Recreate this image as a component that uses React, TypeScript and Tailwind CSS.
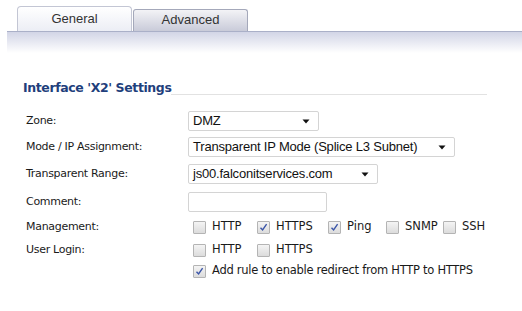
import React from "react";

const labelFont = { fontFamily: "'DejaVu Sans', Verdana, sans-serif" };

function Arrow() {
  return (
    <svg width="8" height="5" viewBox="0 0 8 5" className="shrink-0">
      <path d="M0.5 0.5 L7.5 0.5 L4 4.5 Z" fill="#111" />
    </svg>
  );
}

function Select({ value, width }: { value: string; width: string }) {
  return (
    <div
      className={`h-[20px] ${width} border border-[#d4d4d4] rounded-[2px] bg-white flex items-center justify-between pl-[4px] pr-[8px] text-[13px] text-[#111] font-['Liberation_Sans',Arial,sans-serif] tracking-[-0.2px]`}
    >
      <span>{value}</span>
      <Arrow />
    </div>
  );
}

function Check({ checked = false }: { checked?: boolean }) {
  return (
    <span className="w-[13px] h-[13px] shrink-0 border border-[#b4b4b4] rounded-[1px] bg-gradient-to-b from-[#f4f4f4] to-[#dcdcdc] flex items-center justify-center">
      {checked && (
        <svg width="9" height="9" viewBox="0 0 9 9">
          <path d="M1.5 4.8 L3.6 7 L7.6 1.2" stroke="#3b55a8" strokeWidth="1.4" fill="none" />
        </svg>
      )}
    </span>
  );
}

function Opt({ label, checked, gap }: { label: string; checked?: boolean; gap: string }) {
  return (
    <span className={`flex items-center gap-[6px] ${gap}`}>
      <Check checked={checked} />
      <span>{label}</span>
    </span>
  );
}

export default function App() {
  return (
    <div className="w-[522px] h-[311px] bg-white overflow-hidden text-[#1a1a1a]" style={labelFont}>
      {/* tabs */}
      <div className="flex items-end h-[31px] pl-[17px] gap-[1px] font-['Liberation_Sans',Arial,sans-serif] text-[13px]">
        <div className="w-[115px] h-[25px] rounded-t-[4px] border border-b-0 border-[#c3c6d4] bg-gradient-to-b from-white to-[#eceef5] flex items-center justify-center text-[#333]">
          General
        </div>
        <div className="w-[115px] h-[22px] rounded-t-[3px] border border-b-0 border-[#a4a8ba] bg-gradient-to-b from-[#f3f3f6] to-[#c9cbd9] flex items-center justify-center text-[#333] pb-[2px]">
          Advanced
        </div>
      </div>
      <div className="ml-[7px] h-[22px] border-t border-[#aab0c8] bg-gradient-to-b from-[#d2d5e6] to-white" />

      {/* title */}
      <div className="ml-[23px] w-[464px] mt-[28px] flex items-end">
        <span className="text-[12.5px] font-bold text-[#1f3f7c] leading-[13px] tracking-[-0.4px]">
          Interface 'X2' Settings
        </span>
        <div className="flex-1 h-px bg-[#e2e2e2] mb-[-1px]" />
      </div>

      {/* form */}
      <div className="ml-[26px] mt-[17px] flex flex-col text-[11px] tracking-[-0.3px]">
        <div className="flex items-center h-[20px]">
          <span className="w-[162px]">Zone:</span>
          <Select value="DMZ" width="w-[131px]" />
        </div>
        <div className="flex items-center h-[20px] mt-[6px]">
          <span className="w-[162px]">Mode / IP Assignment:</span>
          <Select value="Transparent IP Mode (Splice L3 Subnet)" width="w-[267px]" />
        </div>
        <div className="flex items-center h-[20px] mt-[7px]">
          <span className="w-[162px]">Transparent Range:</span>
          <Select value="js00.falconitservices.com" width="w-[190px]" />
        </div>
        <div className="flex items-center h-[20px] mt-[8px]">
          <span className="w-[162px]">Comment:</span>
          <div className="w-[139px] h-[20px] border border-[#d4d4d4] rounded-[2px] bg-white" />
        </div>
        <div className="flex items-center h-[16px] mt-[7px] text-[11.5px] tracking-[0px]">
          <span className="w-[167px] text-[11px] tracking-[-0.3px]">Management:</span>
          <Opt label="HTTP" gap="w-[64px]" />
          <Opt label="HTTPS" checked gap="w-[71px]" />
          <Opt label="Ping" checked gap="w-[58px]" />
          <Opt label="SNMP" gap="w-[57px]" />
          <Opt label="SSH" gap="" />
        </div>
        <div className="flex items-center h-[16px] mt-[7px] text-[11.5px] tracking-[0px]">
          <span className="w-[167px] text-[11px] tracking-[-0.3px]">User Login:</span>
          <Opt label="HTTP" gap="w-[64px]" />
          <Opt label="HTTPS" gap="" />
        </div>
        <div className="flex items-center h-[16px] mt-[5px] text-[11.5px] tracking-[-0.27px]">
          <span className="w-[167px]" />
          <Opt label="Add rule to enable redirect from HTTP to HTTPS" checked gap="" />
        </div>
      </div>
    </div>
  );
}
